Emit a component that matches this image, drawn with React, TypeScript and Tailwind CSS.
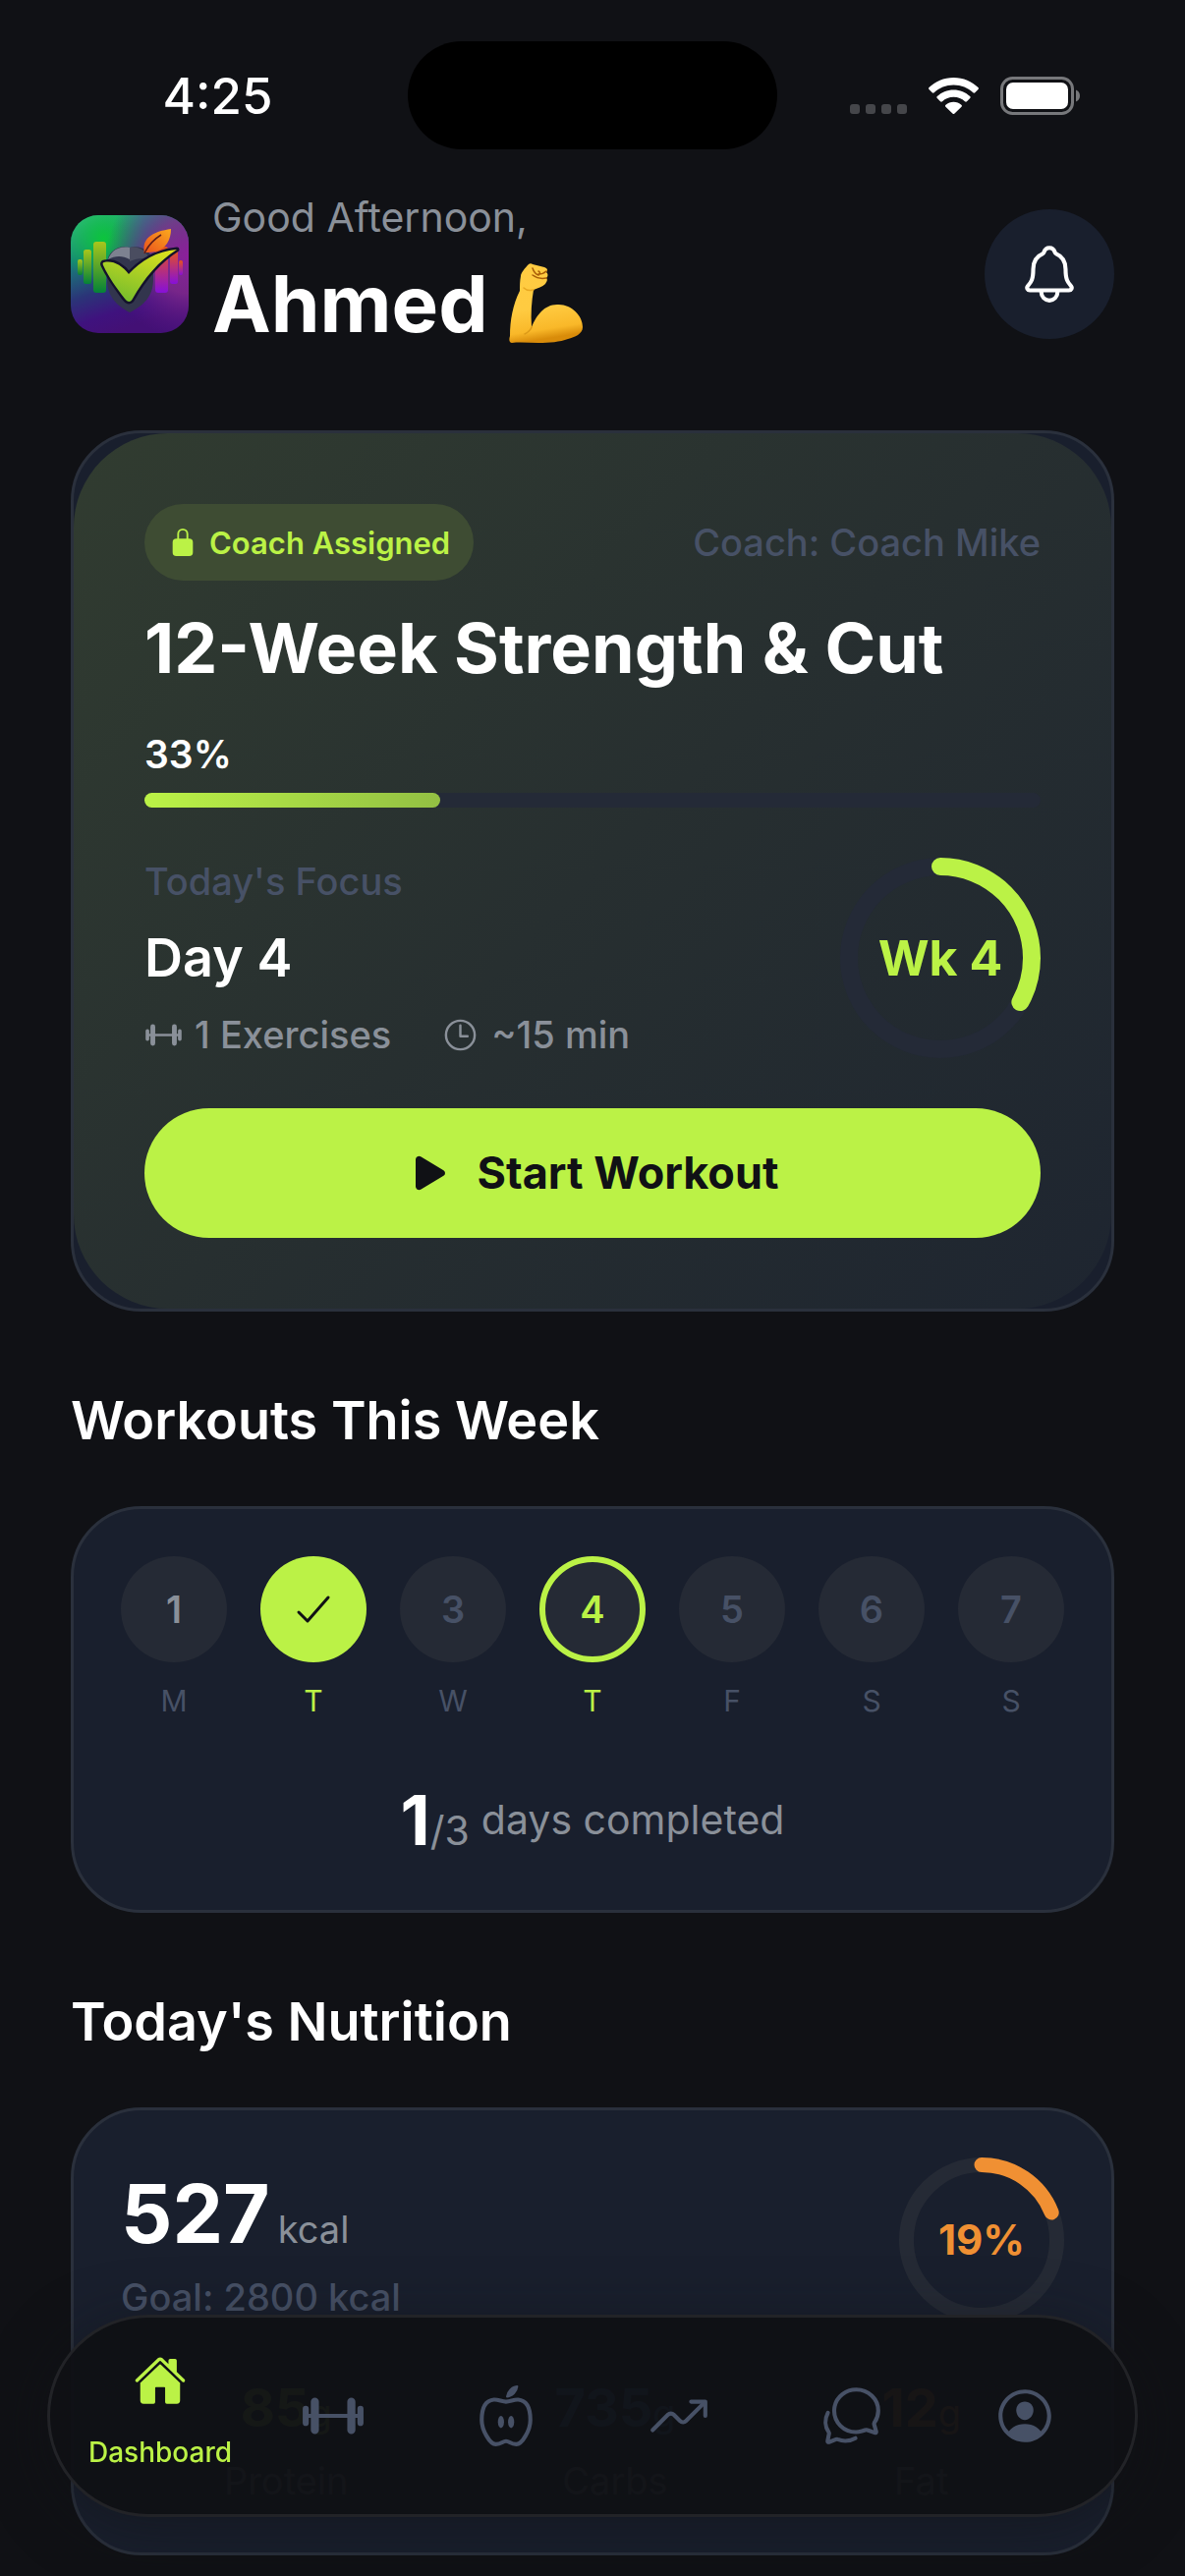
import { useId, type ReactNode } from "react";
import {
  IoBarbellOutline,
  IoChatbubblesOutline,
  IoCheckmark,
  IoHome,
  IoLockClosed,
  IoNotificationsOutline,
  IoNutritionOutline,
  IoPersonCircleOutline,
  IoPlay,
  IoTimeOutline,
  IoTrendingUp,
} from "react-icons/io5";

function StatusBar() {
  return (
    <div className="grid h-[110px] grid-cols-[1fr_auto_1fr] items-center text-white">
      <span className="justify-self-center pl-7 text-[51px] leading-none font-medium">4:25</span>
      <div className="h-[110px] w-[376px] rounded-full bg-black" />
      <div className="flex items-center gap-[22px] justify-self-end pr-[106px]">
        <div className="flex gap-1.5 self-end pb-px">
          {[0, 1, 2, 3].map((n) => (
            <span key={n} className="size-2.5 rounded-[3px] bg-[#45464a]" />
          ))}
        </div>
        <svg width="51" height="37" viewBox="0 0 51 37" fill="#fff" aria-label="Wi-Fi">
          <path d="M25.5 0C15.600 0 6.700 3.900.500 10.100c-.600.600-.600 1.400 0 2l3.200 3.200c.600.600 1.400.600 2 0C10.800 10.400 17.800 7.500 25.500 7.500s14.700 2.900 19.800 7.800c.600.600 1.400.600 2 0l3.200-3.200c.600-.600.600-1.400 0-2C44.300 3.900 35.400 0 25.500 0z" />
          <path d="M25.500 12.500c-6.500 0-12.400 2.500-16.700 6.600-.600.600-.600 1.400 0 2l3.200 3.200c.600.600 1.400.600 2 0 3-2.800 7-4.500 11.500-4.500s8.500 1.700 11.500 4.500c.600.600 1.400.600 2 0l3.200-3.200c.600-.600.600-1.400 0-2-4.300-4.100-10.200-6.600-16.700-6.600z" />
          <path d="M25.500 24.800c-3 0-5.800 1.100-8 2.900-.700.600-.700 1.400-.100 2l7 6.900c.600.600 1.500.600 2.100 0l7-6.900c.600-.600.600-1.500-.100-2-2.100-1.800-4.900-2.900-7.900-2.900z" />
        </svg>
        <svg width="82" height="39" viewBox="0 0 82 39" aria-label="Battery">
          <rect x="1.500" y="1.500" width="72" height="36" rx="11" fill="none" stroke="#77787b" strokeWidth="3" />
          <rect x="6" y="6" width="63" height="27" rx="7" fill="#fff" />
          <path d="M77 13.500c2.500 1 4 3.300 4 6s-1.500 5-4 6z" fill="#77787b" />
        </svg>
      </div>
    </div>
  );
}

function AppLogo() {
  const id = useId();
  return (
    <svg viewBox="0 0 120 120" className="size-[120px] rounded-[28px]" aria-label="App logo">
      <defs>
        <linearGradient id={`${id}bg`} x1="0" y1="0" x2="0.350" y2="1">
          <stop offset="0" stopColor="#3cc08c" />
          <stop offset="0.350" stopColor="#17827a" />
          <stop offset="0.650" stopColor="#2b3478" />
          <stop offset="0.850" stopColor="#3f127e" />
          <stop offset="1" stopColor="#431075" />
        </linearGradient>
        <radialGradient id={`${id}green`} cx="0.280" cy="0.200" r="0.380">
          <stop offset="0" stopColor="#0cc53c" />
          <stop offset="1" stopColor="#0cc53c" stopOpacity="0" />
        </radialGradient>
        <radialGradient id={`${id}purple`} cx="1" cy="0.350" r="0.700">
          <stop offset="0" stopColor="#8c1f9c" />
          <stop offset="0.450" stopColor="#852a8c" stopOpacity="0.800" />
          <stop offset="1" stopColor="#5b1590" stopOpacity="0" />
        </radialGradient>
        <linearGradient id={`${id}bars`} x1="0" y1="0" x2="0" y2="1">
          <stop offset="0" stopColor="#a8c61c" />
          <stop offset="1" stopColor="#048238" />
        </linearGradient>
        <linearGradient id={`${id}hot`} x1="0" y1="0" x2="0" y2="1">
          <stop offset="0" stopColor="#ea5318" />
          <stop offset="1" stopColor="#8610d8" />
        </linearGradient>
        <linearGradient id={`${id}check`} x1="0.800" y1="0" x2="0.300" y2="1">
          <stop offset="0" stopColor="#dbe01e" />
          <stop offset="1" stopColor="#76bd2c" />
        </linearGradient>
        <linearGradient id={`${id}leaf`} x1="1" y1="0" x2="0" y2="1">
          <stop offset="0" stopColor="#fbaa1e" />
          <stop offset="1" stopColor="#ea4f1c" />
        </linearGradient>
      </defs>
      <rect width="120" height="120" fill={`url(#${id}bg)`} />
      <rect width="120" height="120" fill={`url(#${id}green)`} />
      <rect width="120" height="120" fill={`url(#${id}purple)`} />
      <g fill={`url(#${id}bars)`}>
        <rect x="7" y="45" width="5" height="16" rx="2" />
        <rect x="13" y="35" width="8" height="35" rx="2.500" />
        <rect x="23" y="27" width="13" height="52" rx="3" />
      </g>
      <g fill={`url(#${id}hot)`}>
        <rect x="86" y="32" width="13" height="47" rx="3" />
        <rect x="101" y="35" width="8" height="35" rx="2.500" />
        <rect x="110" y="46" width="4" height="15" rx="2" />
      </g>
      <path d="M60 33c-13-3-23 5-23 17v15c0 18 10 27 23 34 14-7 24-16 24-34V50c0-12-11-20-24-17z" fill="#32354d" />
      <path d="M60 33c-11-2-19 3-22 12 7-4 15-4 22 0z" fill="#7d8190" />
      <path d="M60 33v14c7-3 14-4 20-2-3-9-11-14-20-12z" fill="#4a4d60" />
      <path d="M75 39c-3-15 7-22 27-25 0 14-8 25-26 24z" fill={`url(#${id}leaf)`} />
      <path d="M75 39c4-9 9-14 17-19" fill="none" stroke="#5e1d1a" strokeWidth="1.500" />
      <path
        d="M34 48c9-2 18 3 25 12 13-14 28-23 49-25-19 12-33 29-45 50-2 4-5 4-8 0C46 73 39 64 33 51c-1-2 0-3 1-3z"
        fill={`url(#${id}check)`}
        stroke="#14122c"
        strokeWidth="5"
        strokeLinejoin="round"
        paintOrder="stroke"
      />
    </svg>
  );
}

function FlexedArm() {
  const id = useId();
  return (
    <svg viewBox="0 0 76 84" className="h-[84px] w-[76px]" role="img" aria-label="Flexed biceps">
      <defs>
        <linearGradient id={`${id}a`} x1="0" y1="0" x2="0.150" y2="1">
          <stop offset="0" stopColor="#ffcc42" />
          <stop offset="0.600" stopColor="#ffcb41" />
          <stop offset="0.880" stopColor="#f9b829" />
          <stop offset="1" stopColor="#d98c0a" />
        </linearGradient>
      </defs>
      <path
        d="M13 14c0-3 4-8 8-12 1-1 3-1 4 0 4 1 8 2 12 3 3 1 4 3 2 5 2 2 2 4 0 6 2 2 0 4-1 6-3 3-8 4-12 6-2 12-3 24-2 38 5-12 13-23 26-23 14-1 26 11 26 23 0 7-8 10-15 12-8 3-19 4-30 4-9 0-19-1-27 0-3 0-3-4-2-7 0-16 3-32 10-46 0-5 0-10 1-15z"
        fill={`url(#${id}a)`}
      />
      <path d="M25 6c1 3 3 6 6 7 2-1 2-3 0-4M31 12c3 0 6-1 8-3M25 13c4 3 9 4 14 3" fill="none" stroke="#a85d08" strokeWidth="1.500" strokeLinecap="round" />
      <path d="M24 66c-1 3-3 5-7 7" fill="none" stroke="#dc9a18" strokeWidth="1.500" strokeLinecap="round" />
      <path d="M26 28c-4 1-8 0-10-2" fill="none" stroke="#e8a822" strokeWidth="1.500" strokeLinecap="round" />
    </svg>
  );
}

type RingProps = {
  size: number;
  stroke: number;
  progress: number;
  color: string;
  track: string;
  children: ReactNode;
};

function Ring({ size, stroke, progress, color, track, children }: RingProps) {
  const r = (size - stroke) / 2;
  const c = 2 * Math.PI * r;
  return (
    <div className="grid shrink-0 place-items-center">
      <svg width={size} height={size} className="col-start-1 row-start-1 -rotate-90" aria-hidden="true">
        <circle cx={size / 2} cy={size / 2} r={r} fill="none" stroke={track} strokeWidth={stroke} />
        <circle
          cx={size / 2}
          cy={size / 2}
          r={r}
          fill="none"
          stroke={color}
          strokeWidth={stroke}
          strokeLinecap="round"
          strokeDasharray={`${c * progress} ${c}`}
        />
      </svg>
      <div className="col-start-1 row-start-1">{children}</div>
    </div>
  );
}

function ProgramCard() {
  return (
    <section className="rounded-[72px] border-3 border-[#2a303c] bg-[#191f2d]">
      <div className="rounded-[96px] bg-linear-135 from-[#313c30] via-[#272f30] to-[#1e2530] p-[72px]">
        <div className="flex items-center justify-between">
          <div className="flex h-[78px] items-center gap-3 rounded-full bg-[#3e4c33] px-6 text-[#bbf246]">
            <IoLockClosed size={30} />
            <span className="text-[31px] leading-none font-semibold">Coach Assigned</span>
          </div>
          <span className="text-[38px] leading-none font-medium text-[#475166]">Coach: Coach Mike</span>
        </div>
        <h2 className="mt-[27px] text-[70px] leading-[84px] font-bold text-white">12-Week Strength &amp; Cut</h2>
        <p className="mt-[42px] text-[39px] leading-[48px] font-semibold text-white">33%</p>
        <div className="mt-[15px] h-[15px] rounded-full bg-[#242a37]">
          <div className="h-full w-[33%] rounded-full bg-linear-to-r from-[#bbf246] to-[#93c043]" />
        </div>
        <div className="mt-[51px] flex items-center justify-between">
          <div className="flex flex-col gap-[18px]">
            <span className="text-[38px] leading-[48px] font-medium text-[#475166]">Today&#39;s Focus</span>
            <h3 className="text-[54px] leading-[72px] font-semibold text-white">Day 4</h3>
            <div className="flex items-center gap-[51px] text-[38px] leading-[48px] font-medium text-[#8a9099]">
              <span className="flex items-center gap-3">
                <IoBarbellOutline size={39} />1 Exercises
              </span>
              <span className="flex items-center gap-3">
                <IoTimeOutline size={39} />
                ~15 min
              </span>
            </div>
          </div>
          <Ring size={204} stroke={18} progress={0.33} color="#bbf246" track="#242a37">
            <span className="text-[50px] leading-none font-bold text-[#bbf246]">Wk 4</span>
          </Ring>
        </div>
        <button className="mt-[51px] flex h-[132px] w-full items-center justify-center gap-6 rounded-full bg-[#bbf246] text-[45px] font-bold text-[#101115]">
          <IoPlay size={48} />
          Start Workout
        </button>
      </div>
    </section>
  );
}

const days = [
  { n: 1, label: "M", state: "past" },
  { n: 2, label: "T", state: "done" },
  { n: 3, label: "W", state: "idle" },
  { n: 4, label: "T", state: "today" },
  { n: 5, label: "F", state: "idle" },
  { n: 6, label: "S", state: "idle" },
  { n: 7, label: "S", state: "idle" },
];

const dayStyles: Record<string, string> = {
  past: "bg-[#252a35] text-[#8a9099]",
  done: "bg-[#bbf246] text-[#101115]",
  idle: "bg-[#252a35] text-[#475166]",
  today: "border-6 border-[#bbf246] bg-[#252a35] text-[#bbf246]",
};

function WeekCard() {
  return (
    <div className="rounded-[72px] border-3 border-[#2a303c] bg-[#191f2d] p-12">
      <ul className="flex justify-between">
        {days.map((d) => (
          <li key={d.n} className="flex flex-col items-center gap-5">
            <span
              className={`flex size-[108px] items-center justify-center rounded-full text-[38px] font-semibold ${dayStyles[d.state]}`}
            >
              {d.state === "done" ? <IoCheckmark size={48} /> : d.n}
            </span>
            <span
              className={`text-[30px] leading-[39px] ${
                d.state === "done" || d.state === "today" ? "text-[#bbf246]" : "text-[#475166]"
              }`}
            >
              {d.label}
            </span>
          </li>
        ))}
      </ul>
      <p className="mt-[58px] flex items-center justify-center gap-3 text-[41px] text-[#8a9099]">
        <span className="flex items-baseline">
          <span className="text-[70px] leading-[87px] font-bold text-white">1</span>
          <span className="leading-none">/3</span>
        </span>
        <span className="leading-none">days completed</span>
      </p>
    </div>
  );
}

const macros = [
  { value: "85", label: "Protein", color: "text-[#bbf246]" },
  { value: "735", label: "Carbs", color: "text-[#4a90e2]" },
  { value: "12", label: "Fat", color: "text-[#f09033]" },
];

function NutritionCard() {
  return (
    <div className="rounded-[72px] border-3 border-[#2a303c] bg-[#191f2d] p-12">
      <div className="flex items-center justify-between">
        <div>
          <p className="flex items-baseline gap-2 text-[#8a9099]">
            <span className="text-[82px] leading-[112px] font-bold text-white">527</span>
            <span className="text-[38px] leading-none">kcal</span>
          </p>
          <p className="mt-1 text-[38px] leading-[48px] font-medium text-[#475166]">Goal: 2800 kcal</p>
        </div>
        <Ring size={168} stroke={15} progress={0.19} color="#f09033" track="#252a35">
          <span className="text-[42px] leading-none font-bold text-[#f09033]">19%</span>
        </Ring>
      </div>
      <ul className="mt-12 flex justify-around">
        {macros.map((m) => (
          <li key={m.label} className="flex flex-col items-center gap-2.5">
            <span className={`flex items-baseline text-[54px] leading-[78px] font-bold ${m.color}`}>
              {m.value}
              <span className="text-[38px] leading-none font-normal">g</span>
            </span>
            <span className="text-[38px] leading-[50px] text-[#8a9099]">{m.label}</span>
          </li>
        ))}
      </ul>
    </div>
  );
}

const tabs = [
  { label: "Workouts", icon: <IoBarbellOutline size={66} /> },
  { label: "Nutrition", icon: <IoNutritionOutline size={66} /> },
  { label: "Progress", icon: <IoTrendingUp size={66} /> },
  { label: "Messages", icon: <IoChatbubblesOutline size={66} /> },
  { label: "Profile", icon: <IoPersonCircleOutline size={66} /> },
];

function TabBar() {
  return (
    <nav className="fixed inset-x-12 bottom-[60px] flex h-[206px] items-center rounded-full border-3 border-[#222327] bg-[#101115]/97 px-6 shadow-[0_12px_60px_rgba(16,17,21,0.5)]">
      <button className="flex flex-1 flex-col items-center gap-7 pb-2 text-[#bbf246]">
        <IoHome size={54} />
        <span className="text-[28px] leading-[36px] font-medium">Dashboard</span>
      </button>
      {tabs.map((t) => (
        <button key={t.label} aria-label={t.label} className="flex flex-1 justify-center text-[#475166]">
          {t.icon}
        </button>
      ))}
    </nav>
  );
}

export default function App() {
  return (
    <main className="min-h-screen bg-[#101115] pt-[42px] font-['Inter',sans-serif]">
      <StatusBar />
      <div className="px-[72px] pt-[42px] pb-[21px]">
        <header className="flex items-center justify-between">
          <div className="flex items-center gap-6">
            <AppLogo />
            <div className="flex flex-col gap-1.5">
              <p className="text-[41px] leading-[54px] text-[#8a9099]">Good Afternoon,</p>
              <h1 className="flex items-center gap-5 text-[80px] leading-[110px] font-bold text-white">
                Ahmed
                <FlexedArm />
              </h1>
            </div>
          </div>
          <button
            aria-label="Notifications"
            className="flex size-[132px] items-center justify-center rounded-full bg-[#191f2d] text-white"
          >
            <IoNotificationsOutline size={66} />
          </button>
        </header>
        <div className="mt-[74px]">
          <ProgramCard />
        </div>
        <h2 className="mt-[76px] mb-[52px] text-[54px] leading-[70px] font-semibold text-white">Workouts This Week</h2>
        <WeekCard />
        <h2 className="mt-[76px] mb-[52px] text-[54px] leading-[70px] font-semibold text-white">Today&#39;s Nutrition</h2>
        <NutritionCard />
      </div>
      <TabBar />
    </main>
  );
}
